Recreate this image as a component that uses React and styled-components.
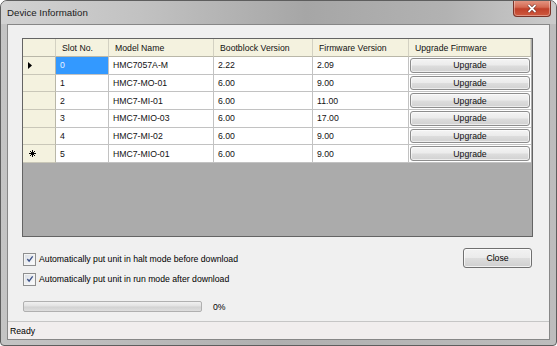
import React from 'react';
import styled, { createGlobalStyle } from 'styled-components';

const GlobalStyle = createGlobalStyle`
	html, body {
		margin: 0;
		padding: 0;
		background: #ffffff;
	}
	body {
		font-family: "Liberation Sans", Arial, sans-serif;
		font-size: 8.7px;
		color: #000;
	}
`;

const Window = styled.div`
	width: 557px;
	height: 346px;
	box-sizing: border-box;
	display: flex;
	flex-direction: column;
	border: 1px solid #5e5e5e;
	border-radius: 7px 7px 4px 4px;
	background: linear-gradient(to right, #c4c4c4, #b0b0b0 50%, #bdbdbd);
	padding: 0 6px 5px 6px;
	overflow: hidden;
`;

const TitleBar = styled.div`
	height: 23px;
	margin: 0 -6px;
	padding: 0 5px 0 6px;
	display: flex;
	justify-content: space-between;
	align-items: flex-start;
	background: linear-gradient(
		to right,
		#d2d2d2 0%,
		#c2c2c2 25%,
		#a6a6a6 55%,
		#b2b2b2 80%,
		#cbcbcb 100%
	);
`;

const Title = styled.span`
	font-size: 9.7px;
	line-height: 24px;
	color: #1a1a1a;
`;

const CloseButton = styled.div`
	width: 38px;
	height: 17px;
	box-sizing: border-box;
	margin-top: -1px;
	display: flex;
	align-items: center;
	justify-content: center;
	border: 1px solid #7a3328;
	border-top: none;
	border-radius: 0 0 4px 4px;
	background: linear-gradient(to bottom, #e59a87 0%, #d46a53 45%, #c0402a 55%, #cf5a3f 100%);
	box-shadow: inset 0 0 0 1px rgba(255, 255, 255, 0.35);
`;

const Client = styled.div`
	flex: 1;
	display: flex;
	flex-direction: column;
	border: 1px solid #878787;
	background: #f0f0f0;
`;

const Body = styled.div`
	flex: 1;
	display: flex;
	flex-direction: column;
	padding: 13px 16px 0 14px;
`;

const DataGrid = styled.div`
	height: 199px;
	box-sizing: border-box;
	border: 1px solid #646464;
	background: #ababab;
`;

const Table = styled.div`
	display: grid;
	grid-template-columns: 33px 53px 105px 99px 96px 122px;
	grid-template-rows: 18px;
	grid-auto-rows: calc(106px / 6);
`;

const HeaderCell = styled.div`
	box-sizing: border-box;
	background: #f4f2df;
	border-right: 1px solid #d3d1c2;
	border-bottom: 1px solid #b9b7a8;
	padding-left: 6px;
	display: flex;
	align-items: center;
	white-space: nowrap;
	color: #111;
`;

const RowHeader = styled.div`
	box-sizing: border-box;
	background: #f4f2df;
	border-right: 1px solid #b9b7a8;
	border-bottom: 1px solid #c9c7b8;
	display: flex;
	align-items: center;
	padding-left: ${(p) => (p.$star ? '6px' : '5px')};
`;

const Cell = styled.div`
	box-sizing: border-box;
	background: ${(p) => (p.$selected ? '#3399ff' : '#ffffff')};
	color: ${(p) => (p.$selected ? '#e8f3ff' : '#111')};
	border-right: 1px solid #c2c2c2;
	border-bottom: 1px solid #c2c2c2;
	padding-left: 4px;
	display: flex;
	align-items: center;
	white-space: nowrap;
`;

const ButtonCell = styled.div`
	box-sizing: border-box;
	background: #ffffff;
	border-bottom: 1px solid #c2c2c2;
	padding: 1px;
	display: flex;
`;

const GridButton = styled.div`
	flex: 1;
	box-sizing: border-box;
	border: 1px solid #8d8d8d;
	border-radius: 3px;
	background: linear-gradient(to bottom, #f4f4f4 0%, #ebebeb 48%, #dddddd 52%, #d1d1d1 100%);
	box-shadow: inset 0 0 0 1px rgba(255, 255, 255, 0.6);
	display: flex;
	align-items: center;
	justify-content: center;
	color: #111;
`;

const Footer = styled.div`
	display: flex;
	justify-content: space-between;
	align-items: flex-start;
	margin-top: 11px;
`;

const Options = styled.div`
	display: flex;
	flex-direction: column;
	padding-left: 1px;
	padding-top: 1px;
`;

const OptionRow = styled.label`
	height: 20px;
	display: flex;
	align-items: center;
	gap: 3px;
	white-space: nowrap;
`;

const CheckBox = styled.span`
	width: 13px;
	height: 13px;
	box-sizing: border-box;
	border: 1px solid #8e8f8f;
	background: linear-gradient(135deg, #d6dbe2, #ffffff);
	box-shadow: inset 0 0 0 1px #f4f4f4;
	display: flex;
	align-items: center;
	justify-content: center;
`;

const ProgressRow = styled.div`
	display: flex;
	align-items: center;
	gap: 11px;
	margin-top: 12px;
`;

const ProgressBar = styled.div`
	width: 179px;
	height: 11px;
	box-sizing: border-box;
	border: 1px solid #b0b0b0;
	border-radius: 2px;
	background: linear-gradient(to bottom, #f0f0f0 0%, #e2e2e2 45%, #d2d2d2 55%, #dedede 100%);
`;

const PushButton = styled.div`
	width: 69px;
	height: 20px;
	box-sizing: border-box;
	border: 1px solid #707070;
	border-radius: 3px;
	background: linear-gradient(to bottom, #f2f2f2 0%, #ebebeb 48%, #dddddd 52%, #cfcfcf 100%);
	box-shadow: inset 0 0 0 1px rgba(255, 255, 255, 0.7);
	display: flex;
	align-items: center;
	justify-content: center;
	margin-right: 1px;
`;

const StatusBar = styled.div`
	height: 18px;
	box-sizing: border-box;
	border-top: 1px solid #c6c6c6;
	background: #f1eeee;
	display: flex;
	align-items: center;
	padding-left: 2px;
`;

const columns = ['Slot No.', 'Model Name', 'Bootblock Version', 'Firmware Version', 'Upgrade Firmware'];

const rows = [
	{ slot: '0', model: 'HMC7057A-M', boot: '2.22', fw: '2.09' },
	{ slot: '1', model: 'HMC7-MO-01', boot: '6.00', fw: '9.00' },
	{ slot: '2', model: 'HMC7-MI-01', boot: '6.00', fw: '11.00' },
	{ slot: '3', model: 'HMC7-MIO-03', boot: '6.00', fw: '17.00' },
	{ slot: '4', model: 'HMC7-MI-02', boot: '6.00', fw: '9.00' },
	{ slot: '5', model: 'HMC7-MIO-01', boot: '6.00', fw: '9.00' },
];

function Check() {
	return (
		<svg width="8" height="8" viewBox="0 0 9 9">
			<path d="M1.5 4.5 L3.5 7 L7.5 1.5" fill="none" stroke="#3d5288" strokeWidth="1.5" />
		</svg>
	);
}

function RowMarker({ index, last }) {
	if (index === 0) {
		return (
			<svg width="5" height="7" viewBox="0 0 5 7">
				<path d="M0 0 L4 3.5 L0 7 Z" fill="#000" />
			</svg>
		);
	}
	if (last) {
		return (
			<svg width="7" height="7" viewBox="0 0 7 7">
				<g stroke="#000" strokeWidth="1">
					<line x1="3.5" y1="0" x2="3.5" y2="7" />
					<line x1="0" y1="3.5" x2="7" y2="3.5" />
					<line x1="1" y1="1" x2="6" y2="6" />
					<line x1="6" y1="1" x2="1" y2="6" />
				</g>
			</svg>
		);
	}
	return null;
}

export default function App() {
	return (
		<>
			<GlobalStyle />
			<Window>
				<TitleBar>
					<Title>Device Information</Title>
					<CloseButton>
						<svg width="10" height="9" viewBox="0 0 10 9">
							<path d="M1.5 1 L8.5 8 M8.5 1 L1.5 8" stroke="#5a1a12" strokeWidth="3" />
							<path d="M1.5 1 L8.5 8 M8.5 1 L1.5 8" stroke="#ffffff" strokeWidth="1.8" />
						</svg>
					</CloseButton>
				</TitleBar>
				<Client>
					<Body>
						<DataGrid>
							<Table>
								<HeaderCell />
								{columns.map((c) => (
									<HeaderCell key={c}>{c}</HeaderCell>
								))}
								{rows.map((r, i) => (
									<React.Fragment key={r.slot}>
										<RowHeader $star={i === rows.length - 1}>
											<RowMarker index={i} last={i === rows.length - 1} />
										</RowHeader>
										<Cell $selected={i === 0}>{r.slot}</Cell>
										<Cell>{r.model}</Cell>
										<Cell>{r.boot}</Cell>
										<Cell>{r.fw}</Cell>
										<ButtonCell>
											<GridButton>Upgrade</GridButton>
										</ButtonCell>
									</React.Fragment>
								))}
							</Table>
						</DataGrid>
						<Footer>
							<Options>
								<OptionRow>
									<CheckBox>
										<Check />
									</CheckBox>
									Automatically put unit in halt mode before download
								</OptionRow>
								<OptionRow>
									<CheckBox>
										<Check />
									</CheckBox>
									Automatically put unit in run mode after download
								</OptionRow>
								<ProgressRow>
									<ProgressBar />
									<span>0%</span>
								</ProgressRow>
							</Options>
							<PushButton>Close</PushButton>
						</Footer>
					</Body>
					<StatusBar>Ready</StatusBar>
				</Client>
			</Window>
		</>
	);
}
